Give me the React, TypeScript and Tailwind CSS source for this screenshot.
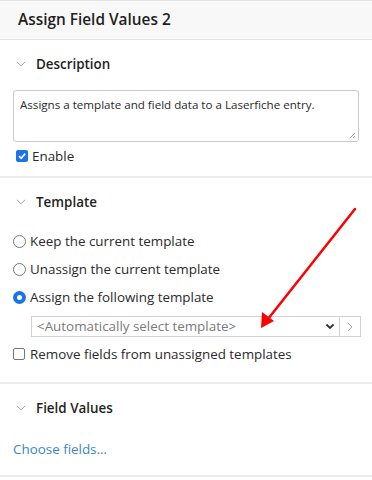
import { ReactNode } from 'react';

function Chevron() {
  return (
    <svg width="10" height="6" viewBox="0 0 10 6" className="shrink-0">
      <polyline points="1,0.8 5,4.8 9,0.8" fill="none" stroke="#9a9a9a" strokeWidth="1" />
    </svg>
  );
}

function SectionHeader({ title }: { title: string }) {
  return (
    <div className="h-[24px] flex items-center pl-[16px]">
      <Chevron />
      <span className="ml-[10px] text-[13.4px] font-semibold text-[#1f1f1f]">{title}</span>
    </div>
  );
}

function Radio({ checked, children }: { checked?: boolean; children: ReactNode }) {
  return (
    <div className="h-[28px] flex items-center pl-[13px]">
      {checked ? (
        <span className="w-[13px] h-[13px] rounded-full bg-[#1a73e8] flex items-center justify-center shrink-0">
          <span className="w-[5px] h-[5px] rounded-full bg-white" />
        </span>
      ) : (
        <span className="w-[13px] h-[13px] rounded-full border border-[#767676] bg-white shrink-0" />
      )}
      <span className="ml-[4px] text-[13.4px] text-[#2a2a2a]">{children}</span>
    </div>
  );
}

export default function App() {
  return (
    <div className="relative w-[372px] h-[480px] overflow-hidden bg-white" style={{ fontFamily: '"Open Sans", "Noto Sans", sans-serif' }}>
      {/* Title bar */}
      <div className="h-[40px] bg-[#f8f8f8] border-t border-b border-[#e3e3e3] flex items-center px-[18px]">
        <h1 className="text-[15.4px] font-semibold text-[#1f1f1f]">Assign Field Values 2</h1>
      </div>

      {/* Description */}
      <div className="pt-[12px] pb-[10px] border-b-2 border-[#ececec]">
        <SectionHeader title="Description" />
        <div className="mt-[14px] mx-[13px] h-[52px] border border-[#c8c8c8] rounded-[3px] px-[6px] pt-[6px] relative">
          <p className="text-[11.6px] text-[#2a2a2a] leading-[16px]">Assigns a template and field data to a Laserfiche entry.</p>
          <svg width="7" height="7" viewBox="0 0 7 7" className="absolute right-[2px] bottom-[2px]">
            <line x1="1" y1="6" x2="6" y2="1" stroke="#9a9a9a" strokeWidth="0.8" />
            <line x1="4" y1="6" x2="6" y2="4" stroke="#9a9a9a" strokeWidth="0.8" />
          </svg>
        </div>
        <div className="mt-[4px] h-[20px] flex items-center pl-[16px]">
          <span className="w-[12px] h-[12px] rounded-[2px] bg-[#1a73e8] flex items-center justify-center shrink-0">
            <svg width="10" height="10" viewBox="0 0 10 10">
              <polyline points="2,5.2 4.2,7.3 8.2,2.6" fill="none" stroke="white" strokeWidth="1.7" />
            </svg>
          </span>
          <span className="ml-[4px] text-[13.4px] text-[#2a2a2a]">Enable</span>
        </div>
      </div>

      {/* Template */}
      <div className="pt-[12px] pb-[18px] border-b-2 border-[#ececec]">
        <SectionHeader title="Template" />
        <div className="mt-[13px]">
          <Radio>Keep the current template</Radio>
          <Radio>Unassign the current template</Radio>
          <Radio checked>Assign the following template</Radio>
        </div>
        <div className="mt-[5px] ml-[31px] mr-[11px] h-[21px] flex border border-[#d2d2d2]">
          <div className="flex-1 flex items-center pl-[5px] pr-[4px]">
            <span className="flex-1 text-[13.4px] text-[#7a7a7a] leading-none">&lt;Automatically select template&gt;</span>
            <svg width="10" height="7" viewBox="0 0 10 7">
              <polyline points="1.5,1.5 5,5 8.5,1.5" fill="none" stroke="#333" strokeWidth="1.8" />
            </svg>
          </div>
          <div className="w-[21px] border-l border-[#d2d2d2] flex items-center justify-center">
            <svg width="6" height="10" viewBox="0 0 6 10">
              <polyline points="1,1 5,5 1,9" fill="none" stroke="#a8a8a8" strokeWidth="1" />
            </svg>
          </div>
        </div>
        <div className="mt-[7px] h-[20px] flex items-center pl-[13px]">
          <span className="w-[12px] h-[12px] rounded-[2px] border border-[#767676] bg-white shrink-0" />
          <span className="ml-[5px] text-[13.4px] text-[#2a2a2a]">Remove fields from unassigned templates</span>
        </div>
      </div>

      {/* Field Values */}
      <div className="pt-[12px] pb-[16px] border-b-2 border-[#ececec]">
        <SectionHeader title="Field Values" />
        <div className="mt-[19px] h-[20px] flex items-center pl-[13px]">
          <span className="text-[13.4px] text-[#3a86c8]">Choose fields...</span>
        </div>
      </div>

      {/* Annotation arrow */}
      <svg className="absolute inset-0 pointer-events-none" width="372" height="480" viewBox="0 0 372 480">
        <line x1="355" y1="209" x2="268" y2="319" stroke="#ff0000" strokeWidth="2.5" strokeLinecap="round" />
        <polygon points="261,328 262,312 274,321" fill="#ff0000" />
      </svg>
    </div>
  );
}
